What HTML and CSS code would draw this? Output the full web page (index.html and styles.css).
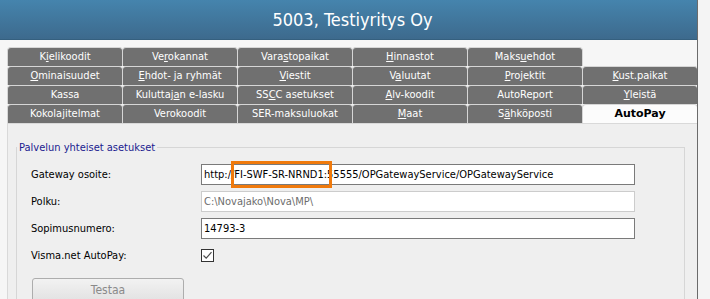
FILE: index.html
```html
<!DOCTYPE html>
<html lang="fi">
<head>
    <meta charset="UTF-8">
    <title>5003, Testiyritys Oy</title>
    <link rel="stylesheet" href="styles.css">
</head>
<body>
    <div class="window">
        <header class="titlebar">5003, Testiyritys Oy</header>

        <div class="tabstrip">
            <div class="tabrow">
                <div class="tab">K<u>i</u>elikoodit</div>
                <div class="tab">Ve<u>r</u>okannat</div>
                <div class="tab">Vara<u>s</u>topaikat</div>
                <div class="tab"><u>H</u>innastot</div>
                <div class="tab">Maks<u>u</u>ehdot</div>
            </div>
            <div class="tabrow">
                <div class="tab"><u>O</u>minaisuudet</div>
                <div class="tab"><u>E</u>hdot- ja ryhmät</div>
                <div class="tab"><u>V</u>iestit</div>
                <div class="tab">V<u>a</u>luutat</div>
                <div class="tab"><u>P</u>rojektit</div>
                <div class="tab"><u>K</u>ust.paikat</div>
            </div>
            <div class="tabrow">
                <div class="tab">Kassa</div>
                <div class="tab">Kuluttaj<u>a</u>n e-lasku</div>
                <div class="tab">SS<u>C</u>C asetukset</div>
                <div class="tab"><u>A</u>lv-koodit</div>
                <div class="tab">AutoReport</div>
                <div class="tab"><u>Y</u>leistä</div>
            </div>
            <div class="tabrow">
                <div class="tab">Kokolajitelmat</div>
                <div class="tab">Verokoodit</div>
                <div class="tab">SER-maksuluokat</div>
                <div class="tab"><u>M</u>aat</div>
                <div class="tab">S<u>ä</u>hköposti</div>
                <div class="tab active">AutoPay</div>
            </div>
        </div>

        <main class="page">
            <fieldset class="group">
                <legend>Palvelun yhteiset asetukset</legend>

                <div class="row">
                    <label>Gateway osoite:</label>
                    <div class="field">http://FI-SWF-SR-NRND1:55555/OPGatewayService/OPGatewayService</div>
                </div>
                <div class="row">
                    <label>Polku:</label>
                    <div class="field disabled">C:\Novajako\Nova\MP\</div>
                </div>
                <div class="row">
                    <label>Sopimusnumero:</label>
                    <div class="field">14793-3</div>
                </div>
                <div class="row">
                    <label>Visma.net AutoPay:</label>
                    <span class="check">
                        <svg width="11" height="11" viewBox="0 0 11 11">
                            <path d="M1.5 5.5 L4.2 8.2 L9.5 2.2" fill="none" stroke="#4d4d4d" stroke-width="1.2"/>
                        </svg>
                    </span>
                </div>

                <button class="btn" disabled>Testaa</button>
            </fieldset>

            <!-- annotation marker over the host name -->
            <div class="marker"></div>
        </main>
    </div>
</body>
</html>
```

FILE: styles.css
```css
body {
    margin: 0;
    background-color: #f4f4f4;
    font-family: 'DejaVu Sans Condensed', 'DejaVu Sans', sans-serif;
    font-size: 11px;
    color: #000;
    overflow: hidden;
}

.window {
    width: 697px;
    height: 299px;
    border-right: 1px solid #6b6b6b;
    background-color: #f6f6f6;
    display: flex;
    flex-direction: column;
    overflow: hidden;
}

.titlebar {
    flex-shrink: 0;
    height: 39px;
    border-bottom: 1px solid #35607f;
    background-image: linear-gradient(#4584ad, #3d6a8d);
    color: #fff;
    font-size: 18px;
    display: flex;
    align-items: center;
    justify-content: center;
    padding-left: 8px;
}

.tabstrip {
    flex-shrink: 0;
    padding: 7px 0 0 7px;
}

.tabrow {
    display: flex;
    height: 19px;
}

.tab {
    box-sizing: border-box;
    flex-shrink: 0;
    width: 116px;
    height: 19px;
    margin-right: -1px;
    border: 1px solid #d6d6d6;
    border-bottom: none;
    border-radius: 4px 4px 0 0;
    background-color: #707070;
    color: #fff;
    text-align: center;
    line-height: 17px;
    white-space: nowrap;
}

.tab u {
    text-underline-offset: 1px;
}

.tab.active {
    background-color: #fcfcfc;
    color: #000;
    font-weight: bold;
    font-family: 'DejaVu Sans', sans-serif;
}

.page {
    position: relative;
    flex-grow: 1;
    flex-shrink: 0;
    margin-left: 7px;
    border-top: 1px solid #d9d9d9;
    border-left: 1px solid #d9d9d9;
    background-color: #efefef;
    padding: 17px 12px 0 8px;
}

.group {
    margin: 0;
    padding: 0 0 20px 14px;
    border: 1px solid #d6d6d6;
}

.group legend {
    padding: 0 2px;
    margin-left: -14px;
    color: #1b1b8f;
    line-height: 13px;
}

.row {
    display: flex;
    align-items: center;
    height: 21px;
    margin-top: 6px;
}

.row:first-of-type {
    margin-top: 10px;
}

.row label {
    width: 170px;
}

.field {
    box-sizing: border-box;
    width: 434px;
    height: 21px;
    padding-left: 2px;
    border: 1px solid #7a7a7a;
    background-color: #fff;
    line-height: 19px;
    white-space: nowrap;
    overflow: hidden;
}

.field.disabled {
    border-color: #cccccc;
    color: #6d6d6d;
}

.check {
    box-sizing: border-box;
    width: 13px;
    height: 13px;
    border: 1px solid #333;
    background-color: #fff;
    display: flex;
    align-items: center;
    justify-content: center;
}

.btn {
    display: block;
    margin-top: 12px;
    margin-left: 1px;
    width: 152px;
    height: 24px;
    border: 1px solid #adadad;
    border-radius: 3px;
    background-image: linear-gradient(#f2f2f2, #e2e2e2);
    color: #8a8a8a;
    font-family: inherit;
    font-size: 12px;
}

.marker {
    position: absolute;
    left: 223px;
    top: 37px;
    width: 95px;
    height: 21px;
    border: 3px solid #f07a0c;
}
```
